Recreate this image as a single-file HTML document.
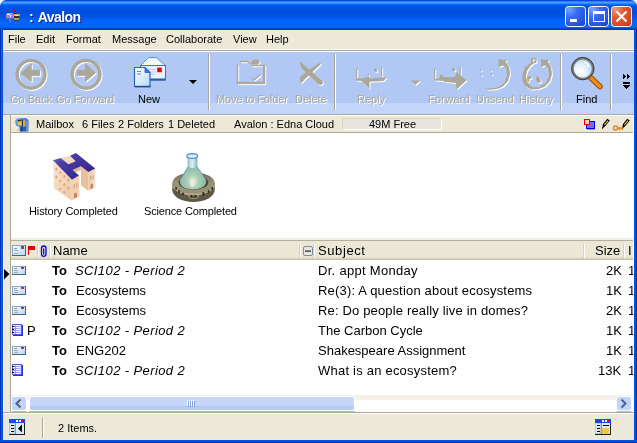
<!DOCTYPE html>
<html><head><meta charset="utf-8">
<style>
*{margin:0;padding:0;box-sizing:border-box}
html,body{width:637px;height:443px;overflow:hidden;background:#fff}
body{position:relative;font-family:"Liberation Sans",sans-serif;font-size:11px;color:#000}
.a{position:absolute}
.t{position:absolute;white-space:nowrap}
.t,.menu,.lbl,.row,#tl{will-change:transform}
#title{position:absolute;left:0;top:0;width:637px;height:30px;border-radius:6px 6px 0 0;overflow:hidden;background:linear-gradient(180deg,#0a48d8 0px,#0a48d8 1px,#2a7ef6 1px,#2a7ef6 2px,#4a9eff 2px,#4a9eff 3px,#2c88ff 3px,#2c88ff 4px,#0d6cf6 4px,#0d6cf6 5px,#0059e9 5px,#0059e9 6px,#0054e3 6px,#0054e3 7px,#0053e2 7px,#0053e2 8px,#0052e0 8px,#0052e0 9px,#0051df 9px,#0051df 10px,#0050de 10px,#0050de 11px,#0050dd 11px,#0050dd 12px,#0050dd 12px,#0050dd 13px,#0050de 13px,#0050de 14px,#0051e0 14px,#0051e0 15px,#0053e3 15px,#0053e3 16px,#0055e6 16px,#0055e6 17px,#0058ea 17px,#0058ea 18px,#005cef 18px,#005cef 19px,#0061f5 19px,#0061f5 20px,#0064f9 20px,#0064f9 21px,#0066fb 21px,#0066fb 22px,#0066fc 22px,#0066fc 23px,#0066fc 23px,#0066fc 24px,#0066fc 24px,#0066fc 25px,#0065fb 25px,#0065fb 26px,#0064fa 26px,#0064fa 27px,#005ef4 27px,#005ef4 28px,#0046d4 28px,#0046d4 29px,#0036b8 29px,#0036b8 30px)}
#tl{position:absolute;left:29px;top:9px;font-size:14px;font-weight:bold;color:#fff;text-shadow:1px 1px #0a1e8a;letter-spacing:-0.6px;word-spacing:2px}
#frameL{position:absolute;left:0;top:29px;width:3px;height:414px;background:linear-gradient(90deg,#0032b8 0,#0032b8 1px,#0a5cf0 1px,#0a5cf0 2px,#0050e2 2px)}
#frameR{position:absolute;left:634px;top:29px;width:3px;height:414px;background:linear-gradient(90deg,#0052e6 0,#0052e6 2px,#0030a8 2px)}
#frameB{position:absolute;left:0;top:440px;width:637px;height:3px;background:linear-gradient(180deg,#0052e6 0,#0052e6 2px,#0030a8 2px)}
#client{position:absolute;left:3px;top:30px;width:631px;height:410px;background:#ece9d8}
.menu{position:absolute;top:33px}
.sep{position:absolute;top:54px;width:2px;height:56px;border-left:1px solid #aca899;border-right:1px solid #fff}
.lbl{position:absolute;top:93px;white-space:nowrap}
.dis{color:#aca899;text-shadow:1px 1px #fff}
.row{position:absolute;left:11px;width:622px;height:20px;font-size:13px}
.row .t{top:3px}
.hs{position:absolute;top:244px;width:2px;height:14px;border-left:1px solid #d6d2c2;border-right:1px solid #fff}
</style></head><body>
<div id="title"><div id="tl">: Avalon</div></div>
<div id="frameL"></div><div id="frameR"></div><div id="frameB"></div>
<div id="client"></div>

<!-- menu -->
<div class="menu" style="left:8px">File</div>
<div class="menu" style="left:36px">Edit</div>
<div class="menu" style="left:66px">Format</div>
<div class="menu" style="left:112px">Message</div>
<div class="menu" style="left:166px">Collaborate</div>
<div class="menu" style="left:233px">View</div>
<div class="menu" style="left:266px">Help</div>
<div class="a" style="left:3px;top:49px;width:631px;height:1px;background:#fcfbf5"></div>
<div class="a" style="left:3px;top:50px;width:631px;height:1px;background:#aca899"></div>
<div class="a" style="left:3px;top:51px;width:631px;height:1px;background:#fff"></div>

<!-- toolbar -->
<div class="a" style="left:3px;top:52px;width:631px;height:51px;background:#b0c8f3"></div>
<div class="a" style="left:3px;top:103px;width:631px;height:11px;background:#c3d5f8"></div>
<div class="a" style="left:3px;top:114px;width:631px;height:1px;background:#aca899"></div>
<div class="sep" style="left:208px"></div>
<div class="sep" style="left:334px"></div>
<div class="sep" style="left:560px"></div>
<div class="sep" style="left:610px"></div>
<div class="lbl dis" style="left:10px">Go Back</div>
<div class="lbl dis" style="left:56px">Go Forward</div>
<div class="lbl" style="left:138px">New</div>
<div class="lbl dis" style="left:216px;letter-spacing:-0.12px">Move to Folder</div>
<div class="lbl dis" style="left:295px">Delete</div>
<div class="lbl dis" style="left:357px">Reply</div>
<div class="lbl dis" style="left:428px;letter-spacing:0.25px">Forward</div>
<div class="lbl dis" style="left:476px">Unsend</div>
<div class="lbl dis" style="left:519px">History</div>
<div class="lbl" style="left:576px">Find</div>


<!-- container border -->
<div class="a" style="left:3px;top:115px;width:1px;height:297px;background:#fff"></div>
<div class="a" style="left:10px;top:115px;width:1px;height:297px;background:#aca899"></div>

<!-- mailbox bar -->
<div class="a" style="left:11px;top:115px;width:623px;height:1px;background:#fff"></div>
<div class="a" style="left:11px;top:132px;width:623px;height:1px;background:#aca899"></div>
<div class="t" style="left:36px;top:118px">Mailbox</div>
<div class="t" style="left:82px;top:118px">6 Files</div>
<div class="t" style="left:118px;top:118px">2 Folders</div>
<div class="t" style="left:168px;top:118px">1 Deleted</div>
<div class="t" style="left:234px;top:118px">Avalon : Edna Cloud</div>
<div class="a" style="left:342px;top:118px;width:100px;height:12px;background:#e6e5de;border-top:1px solid #d8d5c8;border-left:1px solid #d8d5c8;border-bottom:1px solid #fff;border-right:1px solid #fff"></div>
<div class="t" style="left:369px;top:118px">49M Free</div>

<!-- folder panel -->
<div class="a" style="left:11px;top:133px;width:623px;height:105px;background:#fff"></div>
<div class="t" style="left:29px;top:205px;letter-spacing:-0.1px">History Completed</div>
<div class="t" style="left:144px;top:205px;letter-spacing:-0.15px">Science Completed</div>

<!-- splitter + header -->
<div class="a" style="left:11px;top:238px;width:623px;height:2px;background:#f1efe4"></div>
<div class="a" style="left:11px;top:240px;width:623px;height:1px;background:#b4b09e"></div>
<div class="a" style="left:11px;top:241px;width:623px;height:18px;background:#ebe8d7"></div>
<div class="a" style="left:11px;top:257px;width:623px;height:3px;background:linear-gradient(180deg,#e4e0cd 0,#e4e0cd 1px,#d8d4c0 1px,#d8d4c0 2px,#c6c2ae 2px)"></div>
<div class="hs" style="left:37px"></div>
<div class="hs" style="left:49px"></div>
<div class="hs" style="left:299px"></div>
<div class="hs" style="left:313px"></div>
<div class="hs" style="left:583px"></div>
<div class="hs" style="left:623px"></div>
<div class="t" style="left:53px;top:243px;font-size:13px">Name</div>
<div class="t" style="left:318px;top:243px;font-size:13px;letter-spacing:0.6px">Subject</div>
<div class="t" style="left:595px;top:243px;font-size:13px">Size</div>
<div class="t" style="left:628px;top:243px;font-size:13px">I</div>

<!-- list -->
<div class="a" style="left:11px;top:260px;width:623px;height:135px;background:#fff"></div>
<div class="row" style="top:260px"><span class="t" style="left:41px;font-weight:bold">To</span><span class="t" style="left:64px;font-style:italic;letter-spacing:0.4px">SCI102 - Period 2</span><span class="t" style="left:307px;letter-spacing:0.3px">Dr. appt Monday</span><span class="t" style="left:595px">2K</span><span class="t" style="left:617px">1</span></div>
<div class="row" style="top:280px"><span class="t" style="left:41px;font-weight:bold">To</span><span class="t" style="left:65px">Ecosystems</span><span class="t" style="left:307px;letter-spacing:0.18px">Re(3): A question about ecosystems</span><span class="t" style="left:595px">1K</span><span class="t" style="left:617px">1</span></div>
<div class="row" style="top:300px"><span class="t" style="left:41px;font-weight:bold">To</span><span class="t" style="left:65px">Ecosystems</span><span class="t" style="left:307px;letter-spacing:0.16px">Re: Do people really live in domes?</span><span class="t" style="left:595px">2K</span><span class="t" style="left:617px">1</span></div>
<div class="row" style="top:320px"><span class="t" style="left:16px">P</span><span class="t" style="left:41px;font-weight:bold">To</span><span class="t" style="left:64px;font-style:italic;letter-spacing:0.4px">SCI102 - Period 2</span><span class="t" style="left:307px">The Carbon Cycle</span><span class="t" style="left:595px">1K</span><span class="t" style="left:617px">1</span></div>
<div class="row" style="top:340px"><span class="t" style="left:41px;font-weight:bold">To</span><span class="t" style="left:65px">ENG202</span><span class="t" style="left:307px">Shakespeare Assignment</span><span class="t" style="left:595px">1K</span><span class="t" style="left:617px">1</span></div>
<div class="row" style="top:360px"><span class="t" style="left:41px;font-weight:bold">To</span><span class="t" style="left:64px;font-style:italic;letter-spacing:0.4px">SCI102 - Period 2</span><span class="t" style="left:307px;letter-spacing:0.22px">What is an ecosystem?</span><span class="t" style="left:587px">13K</span><span class="t" style="left:617px">1</span></div>

<!-- scrollbar -->
<div class="a" style="left:11px;top:395px;width:623px;height:17px;background:#fefefe"></div>
<div class="a" style="left:11px;top:395px;width:623px;height:5px;background:#f3f1ea"></div>
<div class="a" style="left:11px;top:396px;width:16px;height:15px;background:#c3d4fa;border:1px solid #fff;border-radius:3px"></div>
<div class="a" style="left:29px;top:396px;width:326px;height:15px;border:1px solid #fff;border-radius:3px;background:linear-gradient(180deg,#c6d6f9 0,#c6d6f9 9px,#b4c9f4 9px)"></div>
<div class="a" style="left:616px;top:396px;width:16px;height:15px;background:#c3d4fa;border:1px solid #fff;border-radius:3px"></div>
<div class="a" style="left:29px;top:411px;width:326px;height:1px;background:#a4bce8"></div>
<div class="a" style="left:12px;top:411px;width:14px;height:1px;background:#a4bce8"></div>
<div class="a" style="left:617px;top:411px;width:14px;height:1px;background:#a4bce8"></div>
<div class="a" style="left:3px;top:412px;width:631px;height:1px;background:#aca899"></div>
<div class="a" style="left:3px;top:413px;width:631px;height:1px;background:#fff"></div>

<!-- status -->
<div class="a" style="left:42px;top:417px;width:2px;height:21px;border-left:1px solid #aca899;border-right:1px solid #fff"></div>
<div class="t" style="left:58px;top:422px">2 Items.</div>
<div class="a" style="left:633px;top:115px;width:1px;height:297px;background:#fff"></div>
<!--ICONS--><svg class="a" style="left:0;top:0" width="637" height="443" viewBox="0 0 637 443">
<defs>
 <radialGradient id="gb" cx="0.2" cy="0.15" r="1.1">
  <stop offset="0" stop-color="#7aa4ff"/><stop offset="0.35" stop-color="#3a6cf4"/><stop offset="0.8" stop-color="#2352dc"/><stop offset="1" stop-color="#1c44c8"/>
 </radialGradient>
 <radialGradient id="gr" cx="0.2" cy="0.15" r="1.1">
  <stop offset="0" stop-color="#f09a7c"/><stop offset="0.35" stop-color="#e35a34"/><stop offset="0.8" stop-color="#d44620"/><stop offset="1" stop-color="#b83814"/>
 </radialGradient>
 <g id="icBack">
  <circle cx="31" cy="74.3" r="13.9" fill="none" stroke-width="3.4"/>
  <polygon points="21,73.3 31.2,64 31.2,70.3 39.6,70.3 39.6,75.6 31.2,75.6 31.2,81.6"/>
 </g>
 <g id="icFwd">
  <circle cx="86" cy="74.3" r="13.9" fill="none" stroke-width="3.4"/>
  <polygon points="95.6,72.8 85.6,64 85.6,70.3 77.3,70.3 77.3,75.3 85.6,75.3 85.6,81.3"/>
 </g>
 <g id="icMove">
  <path d="M240 61.5 H247.5 L251 64.5 M237.5 64.5 V82.5 H264 M251 65.5 H264 V82" fill="none" stroke-width="1.4"/>
  <rect x="237" y="82" width="28" height="2.2" stroke="none"/>
  <rect x="263" y="65" width="2.2" height="19" stroke="none"/>
  <path d="M251 64.5 C251 60.5 254 59 256.5 59.5 L258.5 59.3 L259.6 61.5 C259.8 63 258.5 64.5 257 64.7 Z" stroke="none"/>
  <path d="M251.2 77.5 L254 80 L260.5 74.5" fill="none" stroke-width="1.4"/>
 </g>
 <g id="icDel" stroke="none">
  <path d="M299.5 62 L301.5 62.5 L322.5 81 L323 83.6 L321 85 L318.5 84.5 L309.5 76 L302 69 Z"/>
  <path d="M321 63 L320 65 L305.5 78.5 L301.5 83 L300 81.5 L299.8 77.5 L306 72 L319 63.2 Z"/>
 </g>
 <g id="icReply" stroke="none">
  <rect x="356" y="69" width="1.2" height="10.5"/>
  <rect x="381" y="67" width="1.2" height="9.5"/>
  <path d="M374 68.3 L376.5 68.8 L377.5 71.5 L375.5 72 L374 70.5 Z"/>
  <rect x="367.5" y="74" width="1.5" height="1.5"/>
  <path d="M356 78.5 L361.5 78.5 L369 76.5 L369.5 78.5 L386.8 77.3 L383.5 81 L369.5 81.7 L369.5 88.8 L361.5 81 L356 80.5 Z"/>
 </g>
 <g id="icFwdArr" stroke="none">
  <rect x="434" y="69" width="1.2" height="10.5"/>
  <rect x="459.5" y="66.5" width="1.2" height="9"/>
  <path d="M452 68 L454.5 68.5 L455.5 71 L453.5 71.5 L452 70 Z"/>
  <path d="M440 74.5 L443 75 L444 77 L455 77 L456.5 72 L466.6 80.3 L456.5 89.5 L456 83 L445 82 L444 81 L435 80.5 L434 79.5 L440 78 Z"/>
 </g>
 <g id="icUnsend" stroke="none">
  <path d="M498.5 59 L503.5 60 L507 59.5 L505.5 62 L509 67 L510 74 L508 81 L503 86.5 L496 89.3 L488.5 89.8 L484.5 88.5 L492 88.3 L499 87 L504.5 82.5 L507 76 L506.3 69 L503 65.5 L498.5 67 Z"/>
  <rect x="480" y="69.5" width="1.4" height="1.4"/><rect x="480.5" y="74" width="1.4" height="1.4"/>
  <rect x="490" y="69.5" width="1.4" height="1.4"/><rect x="491" y="73.5" width="1.4" height="1.4"/>
 </g>
 <g id="icHist" stroke="none">
  <path d="M541 59 L546 60 L549 59.5 L548 62 L551 67 L552 74 L550 81 L545 86.5 L538 89.3 L531 89.5 L525 86 L522 80 L522.5 74 L525 68 L529 64 L532 62 L533.5 63.5 L530 66.5 L527 71 L526 77 L528 83 L533 87.3 L539 87.3 L546 82.5 L549 76 L548.3 69 L545 65.5 L541 67 Z"/>
  <path d="M531.5 58 L535 57.7 L537 60 L536 63 L532.5 63.5 L531 61 Z M533 59.2 L533 62 L535.3 61.5 L535.2 59.5 Z" fill-rule="evenodd"/>
  <rect x="524" y="67" width="3" height="1.5"/>
  <path d="M527 76.5 L531 76 L531.5 78.5 L529 79.5 L529.5 82 L527.5 81 Z"/>
  <path d="M536.5 76 L538.5 76.5 L540 79 L541 82 L538.5 83 L536 80 Z"/>
 </g>
</defs>
<!-- title icon -->
<g shape-rendering="crispEdges">
 <rect x="7" y="13" width="6" height="1" fill="#b0a8f4"/>
 <rect x="6" y="14" width="8" height="5" fill="#9088e4"/>
 <rect x="7" y="14" width="3" height="1" fill="#e8e4ff"/>
 <rect x="10" y="15" width="1" height="2" fill="#f0eeff"/>
 <rect x="6" y="18" width="8" height="1" fill="#6a60c4"/>
 <rect x="9" y="19" width="2" height="3" fill="#6e66c8"/>
 <rect x="13" y="9" width="1" height="5" fill="#e40000"/>
 <rect x="13" y="9" width="3" height="2" fill="#e40000"/>
 <rect x="14" y="13" width="2" height="1" fill="#302810"/>
 <rect x="14" y="14" width="6" height="2" fill="#d8a828"/>
 <rect x="15" y="15" width="3" height="1" fill="#fff4b0"/>
 <rect x="14" y="16" width="5" height="2" fill="#403418"/>
 <rect x="14" y="18" width="5" height="2" fill="#a8a088"/>
 <rect x="14" y="20" width="5" height="1" fill="#403828"/>
</g>
<!-- window buttons -->
<rect x="565.5" y="6.5" width="20" height="20" rx="3" fill="url(#gb)" stroke="#fff"/>
<rect x="570" y="19" width="7" height="3" fill="#fff" shape-rendering="crispEdges"/>
<rect x="588.5" y="6.5" width="20" height="20" rx="3" fill="url(#gb)" stroke="#fff"/>
<g shape-rendering="crispEdges" fill="#fff">
 <rect x="593" y="11" width="12" height="3"/><rect x="593" y="14" width="1" height="8"/><rect x="604" y="14" width="1" height="8"/><rect x="593" y="21" width="12" height="1"/>
</g>
<rect x="611.5" y="6.5" width="20" height="20" rx="3" fill="url(#gr)" stroke="#fff"/>
<path d="M616.5 11.5 L626.5 21.5 M626.5 11.5 L616.5 21.5" stroke="#fff" stroke-width="2.2"/>
<!-- disabled toolbar icons: white shadow then gray -->
<g fill="#fff" stroke="#fff" transform="translate(1,1)">
 <use href="#icBack"/><use href="#icFwd"/>
</g>
<g fill="#aca899" stroke="#aca899">
 <use href="#icBack"/><use href="#icFwd"/>
</g>

<!-- New icon -->
<g>
 <path d="M140.5 65.5 L148.5 57.5 L156.5 57.5 L165.5 65.5 Z" fill="#dfeefa" stroke="#6a98cc"/>
 <path d="M143 65 L149 59 L156 59 L162 65 Z" fill="#f4faff"/>
 <rect x="140.5" y="65.5" width="25" height="14.5" fill="#e8f2fb" stroke="#3f6fb4"/>
 <rect x="141" y="78.5" width="24.5" height="2" fill="#2d5aa8"/>
 <rect x="157" y="67.3" width="5" height="5" fill="#e80000" stroke="#f2c8c8" stroke-width="0.6"/>
 <path d="M149 69.5 H155 M149 72 H156 M149 74.5 H155" stroke="#b8c4d4" stroke-width="0.8"/>
 <defs><linearGradient id="gdoc" x1="0" y1="0" x2="1" y2="1"><stop offset="0" stop-color="#ffffff"/><stop offset="1" stop-color="#b8d8f4"/></linearGradient></defs>
 <path d="M134.5 67.5 L145 67.5 L150 72.5 L150 86.5 L134.5 86.5 Z" fill="url(#gdoc)" stroke="#2f62c0" stroke-width="1.2"/>
 <path d="M145 67.5 L145 72.5 L150 72.5 Z" fill="#3a7ad8" stroke="#2f62c0" stroke-width="0.8"/>
 <rect x="135" y="85.8" width="15.5" height="1.6" fill="#1a48a0"/>
 <path d="M137 71.5 H141 M137 74 H141" stroke="#6a7890" stroke-width="0.9"/>
</g>
<!-- dropdown arrows -->
<path d="M189 80 H197 L193 84 Z" fill="#000"/>
<g fill="#fff" stroke="#fff" transform="translate(1,1)">
 <use href="#icMove"/><use href="#icDel"/><use href="#icReply"/><use href="#icFwdArr"/><use href="#icUnsend"/><use href="#icHist"/>
 <path d="M411 80.5 H420 L415.5 85 Z" stroke="none"/>
</g>
<g fill="#aca899" stroke="#aca899">
 <use href="#icMove"/><use href="#icDel"/><use href="#icReply"/><use href="#icFwdArr"/><use href="#icUnsend"/><use href="#icHist"/>
 <path d="M411 80.5 H420 L415.5 85 Z" stroke="none"/>
</g>
<!-- Find -->
<defs>
 <radialGradient id="glens" cx="0.35" cy="0.65" r="0.7"><stop offset="0" stop-color="#ffffff"/><stop offset="0.5" stop-color="#e4f2fa"/><stop offset="1" stop-color="#a8d0ec"/></radialGradient>
 <linearGradient id="ghand" x1="0" y1="0" x2="1" y2="0"><stop offset="0" stop-color="#f0a020"/><stop offset="1" stop-color="#b85800"/></linearGradient>
</defs>
<path d="M590.5 77.5 L600 86.5" stroke="#a04800" stroke-width="5.6" stroke-linecap="round"/>
<path d="M590.5 77.5 L600 86.5" stroke="#f08c10" stroke-width="3.6" stroke-linecap="round"/>
<circle cx="582.8" cy="68.6" r="10.2" fill="url(#glens)" stroke="#7c7c7c" stroke-width="2.2"/>
<circle cx="582.8" cy="68.6" r="11.2" fill="none" stroke="#303030" stroke-width="0.9"/>
<path d="M584 62 Q588 63 589 67" stroke="#fff" stroke-width="1.6" fill="none"/>
<!-- chevron -->
<g fill="#000" shape-rendering="crispEdges">
 <path d="M623 74 L626 76.5 L623 79 Z"/><path d="M627 74 L630 76.5 L627 79 Z"/>
 <rect x="623" y="82" width="7" height="1.5"/>
 <path d="M623 85 L630 85 L626.5 89 Z"/>
</g>
<!--ICONS2--><!-- mailbox bar icon -->
<defs>
 <linearGradient id="gmb" x1="0" y1="0" x2="1" y2="1"><stop offset="0" stop-color="#78b4f4"/><stop offset="0.6" stop-color="#3070d0"/><stop offset="1" stop-color="#1a48a8"/></linearGradient>
</defs>
<path d="M15 121.5 Q15.5 118 19.5 118 L25.5 118 Q28.6 118.5 28.6 122 L28.3 131.5 L19.5 131.5 L19.5 127 L16 125.5 Z" fill="url(#gmb)"/>
<path d="M17.5 120 Q19 119 21.5 119.5 L21.5 126 L17.8 125 Z" fill="#e0c838"/>
<path d="M17.5 120 L21.5 119.5 L21.5 121 L18 121.5 Z" fill="#3a3020"/>
<path d="M23 120.5 L25.5 120 L25.5 126 L23 127 Z" fill="#f0a020"/>
<path d="M22 119.5 L23 119.5 L23 131 L22 131 Z" fill="#1a3a80"/>
<rect x="20.5" y="126.5" width="1.5" height="5" fill="#204c9c"/>
<rect x="26" y="121" width="2" height="10" fill="#5a98e0"/>
<rect x="17" y="129" width="3" height="2" fill="#c8c8c0"/>
<!-- right mailbox-bar icons -->
<g shape-rendering="crispEdges">
 <rect x="586" y="121" width="9" height="8" fill="#0000e0"/>
 <rect x="587" y="122" width="7" height="6" fill="#7070d8"/>
 <rect x="584" y="119" width="6" height="6" fill="#e00000"/>
 <rect x="585" y="120" width="4" height="4" fill="#f4d8b0"/>
 <rect x="587" y="129" width="8" height="1" fill="#a0a0b0"/>
</g>
<path d="M601.8 129.5 L603 124 L607.3 118.7 L609.8 120.6 L605.5 125.8 Z" fill="#000"/>
<path d="M604 124.5 L607.6 120.2 L608.4 120.9 L604.8 125.2 Z" fill="#f0d020"/>
<path d="M621.8 129.5 L623 124 L627.3 118.7 L629.8 120.6 L625.5 125.8 Z" fill="#000"/>
<path d="M624 124.5 L627.6 120.2 L628.4 120.9 L624.8 125.2 Z" fill="#f0d020"/>
<g fill="none" stroke="#e88010" stroke-width="1.3">
 <ellipse cx="615.5" cy="128" rx="2" ry="2"/>
 <path d="M617.5 128 H623.5 M619.5 128 V130.3 M622 128 V130.3"/>
</g>
<!-- History building -->
<defs>
 <linearGradient id="groof" x1="0" y1="0" x2="1" y2="1"><stop offset="0" stop-color="#7c74c4"/><stop offset="0.3" stop-color="#4a3ca6"/><stop offset="1" stop-color="#2c1e82"/></linearGradient>
 <linearGradient id="gwallL" x1="0" y1="0" x2="1" y2="1"><stop offset="0" stop-color="#fae6d0"/><stop offset="1" stop-color="#eec6a4"/></linearGradient>
 <linearGradient id="gwallR" x1="0" y1="0" x2="1" y2="0"><stop offset="0" stop-color="#ecc8a8"/><stop offset="1" stop-color="#f8e0c8"/></linearGradient>
</defs>
<g>
 <path d="M60.6 157.9 L70 155.7 L75.6 161.3 L68.5 164.3 Z" fill="#f4d8bc"/>
 <path d="M72.6 170 L80.9 166.2 L80.9 170 L72.6 173.8 Z" fill="#e2b894"/>
 <path d="M80.9 166.2 L88.4 171.9 L88.4 190.8 L80.9 185.5 Z" fill="#e8c09c"/>
 <path d="M88.4 171.9 L95.2 168.5 L95.2 186.5 L88.4 190.8 Z" fill="url(#gwallR)"/>
 <path d="M53 160.2 L71.9 179.8 L71.9 200.5 L54 188.5 Z" fill="url(#gwallL)"/>
 <path d="M71.9 179.8 L79 175.6 L79.5 196.2 L71.9 200.5 Z" fill="#f2d2b2"/>
 <path d="M53 160.2 L60.6 157.9 L68.5 164.3 L75.6 161.3 L70 155.7 L76 153 L95.2 168.5 L88.4 171.9 L80.9 166.2 L72.6 170 L79 175.6 L71.9 179.8 Z" fill="url(#groof)"/>
 <g fill="#dca080">
  <ellipse cx="56.3" cy="169" rx="1" ry="1.5"/><ellipse cx="60.3" cy="172.8" rx="1" ry="1.5"/><ellipse cx="64.3" cy="176.5" rx="1" ry="1.5"/><ellipse cx="68.3" cy="180" rx="1" ry="1.5"/>
  <ellipse cx="56.3" cy="177" rx="1" ry="1.5"/><ellipse cx="60.3" cy="181" rx="1" ry="1.5"/><ellipse cx="64.3" cy="184.5" rx="1" ry="1.5"/><ellipse cx="68.3" cy="188" rx="1" ry="1.5"/>
  <ellipse cx="60.3" cy="189" rx="1" ry="1.3"/><ellipse cx="64.3" cy="192" rx="1" ry="1.3"/>
 </g>
 <path d="M74 198.5 L74 194 Q75.5 191 77 194 L77 197 Z" fill="#c88460"/>
 <rect x="73.8" y="184" width="1.2" height="4.5" fill="#d4a282"/><rect x="76.3" y="183" width="1.2" height="4.5" fill="#d4a282"/>
 <path d="M90.5 189.5 L90.5 185 Q91.8 182 93.1 185 L93.1 188 Z" fill="#c88460"/>
 <rect x="90.3" y="176" width="1.1" height="4" fill="#d4a282"/><rect x="92.5" y="175" width="1.1" height="4" fill="#d4a282"/>
</g>
<!-- Science flask -->
<defs>
 <radialGradient id="gflask" cx="0.5" cy="0.75" r="0.65"><stop offset="0" stop-color="#e8ece0"/><stop offset="0.35" stop-color="#a8cdb4"/><stop offset="1" stop-color="#78b0a4"/></radialGradient>
 <linearGradient id="gneck" x1="0" y1="0" x2="1" y2="0"><stop offset="0" stop-color="#a8d0d8"/><stop offset="0.5" stop-color="#d8eef0"/><stop offset="1" stop-color="#90c0c8"/></linearGradient>
 <linearGradient id="gtop" x1="0" y1="0" x2="0" y2="1"><stop offset="0" stop-color="#6e6852"/><stop offset="0.5" stop-color="#9a9274"/><stop offset="1" stop-color="#a8a080"/></linearGradient>
</defs>
<g>
 <ellipse cx="193.5" cy="190" rx="21.2" ry="12" fill="#5e5846"/>
 <rect x="172.3" y="183" width="42.4" height="7" fill="#6e6852"/>
 <ellipse cx="193.5" cy="183" rx="21.2" ry="10.5" fill="url(#gtop)"/>
 <ellipse cx="193.5" cy="182.5" rx="15" ry="7.5" fill="#4e4a3c"/>
 <path d="M188 157 L188.2 166.5 L180 180 Q178.8 188.5 193 189.5 Q207.2 188.5 206 180 L197 166.5 L197 157 Z" fill="url(#gflask)"/>
 <path d="M188 157 L188.2 166.5 Q190 168 192.5 168 Q195 168 197 166.5 L197 157 Z" fill="url(#gneck)"/>
 <path d="M188.2 166.5 L180 180" stroke="#5a90b8" stroke-width="0.8" fill="none"/>
 <path d="M197 166.5 L206 180" stroke="#5a90b8" stroke-width="0.8" fill="none"/>
 <path d="M188 157 L188.2 166.5 M197 157 L197 166.5" stroke="#78a8c8" stroke-width="0.7" fill="none"/>
 <ellipse cx="192.2" cy="156" rx="5.4" ry="2.4" fill="#d8eef8" stroke="#4a8cd0" stroke-width="1.2"/>
 <ellipse cx="192.5" cy="183" rx="2.2" ry="4" fill="#ece8dc"/>
 <path d="M172.3 183 A21.2 10.5 0 0 0 214.7 183 L208.5 182.5 A15 7.5 0 0 1 178.5 182.5 Z" fill="#9a9274"/>
 <path d="M172.3 183 A21.2 10.5 0 0 0 214.7 183 L214.7 184.5 A21.2 11 0 0 1 172.3 184.5 Z" fill="#b0a888"/>
 <g fill="#2e2a20">
  <rect x="175.3" y="187" width="1.6" height="3" rx="0.7"/><rect x="178.3" y="190" width="1.6" height="3" rx="0.7"/><rect x="182.2" y="192.5" width="1.6" height="3" rx="0.7"/>
  <rect x="190.5" y="195" width="1.8" height="2.5" rx="0.8"/><rect x="194.5" y="195" width="1.8" height="2.5" rx="0.8"/>
  <rect x="202.5" y="192" width="1.8" height="4" rx="0.8"/><rect x="207.8" y="190" width="1.6" height="3" rx="0.7"/><rect x="211.3" y="187" width="1.6" height="3" rx="0.7"/>
 </g>
 <ellipse cx="193.5" cy="196" rx="5" ry="2.5" fill="none" stroke="#b8b090" stroke-width="0.7"/>
</g>
<!-- header icons -->
<defs>
 <linearGradient id="genv" x1="0" y1="0" x2="1" y2="1"><stop offset="0" stop-color="#f4fbff"/><stop offset="1" stop-color="#b4d8f4"/></linearGradient>
 <g id="env" shape-rendering="crispEdges">
  <rect x="0" y="0" width="14" height="9" fill="#506078"/>
  <rect x="0" y="0" width="13" height="8" fill="#8ea4c4"/>
  <rect x="1" y="1" width="12" height="7" fill="url(#genv)"/>
  <rect x="2" y="2" width="3" height="1" fill="#8c96a4"/><rect x="2" y="4" width="4" height="1" fill="#a0a8b4"/><rect x="2" y="6" width="4" height="1" fill="#a0a8b4"/>
  <rect x="9" y="1" width="3" height="2" fill="#e42020"/><rect x="10" y="1" width="1" height="1" fill="#4040c0"/>
 </g>
</defs>
<use href="#env" transform="translate(12,245) scale(1,1.25)"/>
<g shape-rendering="crispEdges">
 <rect x="28" y="246" width="1" height="9" fill="#e00000"/>
 <rect x="28" y="246" width="7" height="4" fill="#e00000"/>
</g>
<path d="M43.7 246 Q46 246 46 248.5 L46 254 Q46 256.3 43.7 256.3 Q41.5 256.3 41.5 254 L41.5 248.5 Q41.5 246 43.7 246 Z M43.7 248.5 L43.7 254.5" fill="none" stroke="#0000e0" stroke-width="1.3"/>
<rect x="303.5" y="246.5" width="9" height="9" rx="1.5" fill="#e8e4d8" stroke="#7a8ca8"/>
<rect x="305" y="250.5" width="6" height="1.2" fill="#202020"/>
<!-- row icons -->
<path d="M4 269 L9.5 274 L4 279.5 Z" fill="#000"/>
<use href="#env" transform="translate(12,266)"/>
<use href="#env" transform="translate(12,286)"/>
<use href="#env" transform="translate(12,306)"/>
<use href="#env" transform="translate(12,346)"/>
<defs>
 <g id="nb" shape-rendering="crispEdges">
  <rect x="1" y="1" width="10" height="11" fill="#3030b0"/>
  <rect x="0" y="0" width="10" height="11" fill="#5a5ad8"/>
  <rect x="1" y="1" width="8" height="9" fill="#ffffff"/>
  <rect x="1" y="2" width="8" height="1" fill="#9a9af4"/><rect x="1" y="4" width="8" height="1" fill="#9a9af4"/><rect x="1" y="6" width="8" height="1" fill="#9a9af4"/><rect x="1" y="8" width="8" height="1" fill="#9a9af4"/>
  <rect x="7" y="1" width="2" height="9" fill="#b0e4f8" opacity="0.7"/>
  <rect x="3" y="1" width="1" height="9" fill="#f07878"/>
  <rect x="0" y="2" width="2" height="1" fill="#000"/><rect x="0" y="5" width="2" height="1" fill="#000"/><rect x="0" y="8" width="2" height="1" fill="#000"/>
 </g>
</defs>
<use href="#nb" transform="translate(12,324)"/>
<use href="#nb" transform="translate(12,364)"/>
<!-- scroll arrows + grip -->
<path d="M20.5 399.5 L16.5 403.5 L20.5 407.5" fill="none" stroke="#4d6185" stroke-width="2"/>
<path d="M621.5 399.5 L625.5 403.5 L621.5 407.5" fill="none" stroke="#4d6185" stroke-width="2"/>
<g shape-rendering="crispEdges">
 <rect x="187" y="400" width="1" height="6" fill="#fff"/><rect x="189" y="400" width="1" height="6" fill="#fff"/><rect x="191" y="400" width="1" height="6" fill="#fff"/><rect x="193" y="400" width="1" height="6" fill="#fff"/>
 <rect x="188" y="401" width="1" height="6" fill="#8aa4d8"/><rect x="190" y="401" width="1" height="6" fill="#8aa4d8"/><rect x="192" y="401" width="1" height="6" fill="#8aa4d8"/><rect x="194" y="401" width="1" height="6" fill="#8aa4d8"/>
</g>
<!-- status icons -->
<defs>
 <g id="stw" shape-rendering="crispEdges">
  <rect x="0" y="0" width="16" height="16" fill="#202020"/>
  <rect x="0" y="0" width="15" height="15" fill="#d8ecfa"/>
  <rect x="0" y="0" width="16" height="4" fill="#1848f0"/>
  <rect x="7" y="1" width="2" height="2" fill="#fff8d0"/><rect x="10" y="1" width="2" height="2" fill="#fff8d0"/><rect x="13" y="1" width="2" height="2" fill="#f00000"/>
  <rect x="0" y="4" width="6" height="11" fill="#b8ccd8"/>
  <rect x="1" y="5" width="4" height="9" fill="#e0ecf4"/>
  <rect x="6" y="4" width="1" height="11" fill="#8898a8"/>
  <rect x="2" y="6" width="3" height="1" fill="#000"/><rect x="2" y="9" width="3" height="1" fill="#000"/><rect x="2" y="12" width="3" height="1" fill="#000"/>
 </g>
</defs>
<use href="#stw" transform="translate(9,419)"/>
<path d="M22 424.5 L22 432.5 L18 428.5 Z" fill="#000"/>
<use href="#stw" transform="translate(595,419)"/>
<g shape-rendering="crispEdges">
 <rect x="603" y="425" width="6" height="1" fill="#000"/>
 <rect x="602" y="428" width="7" height="6" fill="#f0c848"/>
</g>
</svg>
<!--/ICONS-->
</body></html>
